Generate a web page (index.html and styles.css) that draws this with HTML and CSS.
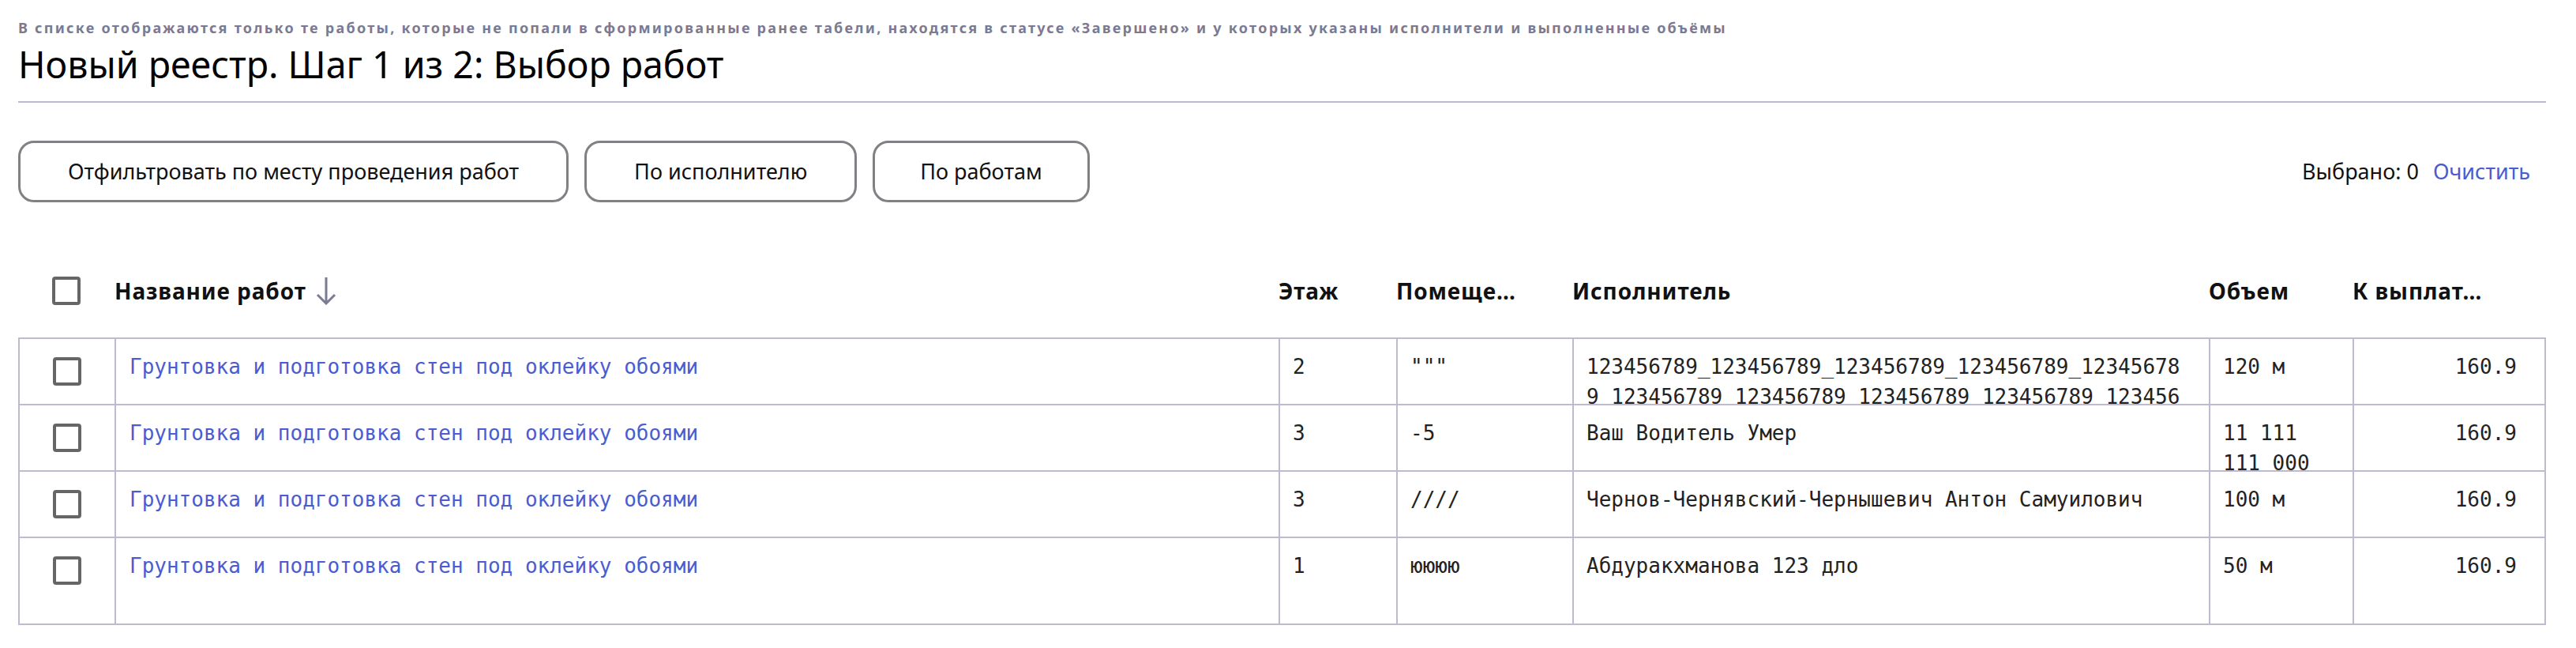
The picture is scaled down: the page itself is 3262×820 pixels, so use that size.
FILE: index.html
```html
<!DOCTYPE html>
<html lang="ru">
<head>
<meta charset="utf-8">
<title>Новый реестр</title>
<link rel="stylesheet" href="styles.css">
</head>
<body>
<div class="page">
  <p class="hint">В списке отображаются только те работы, которые не попали в сформированные ранее табели, находятся в статусе «Завершено» и у которых указаны исполнители и выполненные объёмы</p>
  <h1 class="title">Новый реестр. Шаг 1 из 2: Выбор работ</h1>

  <div class="toolbar">
    <div class="filters">
      <button class="btn">Отфильтровать по месту проведения работ</button>
      <button class="btn">По исполнителю</button>
      <button class="btn btn-narrow">По работам</button>
    </div>
    <div class="selection">
      <span>Выбрано: 0</span>
      <a class="link" href="#">Очистить</a>
    </div>
  </div>

  <div class="grid thead">
    <div class="th th-check"><span class="checkbox"></span></div>
    <div class="th"><span class="label">Название работ</span>
      <svg class="sort" width="26" height="36" viewBox="0 0 26 36"><path d="M13 1 V34 M2 23 L13 34 L24 23" fill="none" stroke="#7b7b93" stroke-width="3"/></svg>
    </div>
    <div class="th"><span class="label">Этаж</span></div>
    <div class="th"><span class="label" title="Помещение">Помеще…</span></div>
    <div class="th"><span class="label">Исполнитель</span></div>
    <div class="th"><span class="label">Объем</span></div>
    <div class="th"><span class="label" title="К выплате">К выплат…</span></div>
  </div>

  <div class="tbody">
    <div class="grid row">
      <div class="td td-check"><span class="checkbox"></span></div>
      <div class="td td-name"><a class="link" href="#">Грунтовка и подготовка стен под оклейку обоями</a></div>
      <div class="td">2</div>
      <div class="td">"""</div>
      <div class="td td-worker">123456789_123456789_123456789_123456789_123456789_123456789_123456789_123456789_123456789_123456789_123456789</div>
      <div class="td td-volume">120 м</div>
      <div class="td td-pay">160.9</div>
    </div>
    <div class="grid row">
      <div class="td td-check"><span class="checkbox"></span></div>
      <div class="td td-name"><a class="link" href="#">Грунтовка и подготовка стен под оклейку обоями</a></div>
      <div class="td">3</div>
      <div class="td">-5</div>
      <div class="td td-worker">Ваш Водитель Умер</div>
      <div class="td td-volume">11 111 111 000</div>
      <div class="td td-pay">160.9</div>
    </div>
    <div class="grid row">
      <div class="td td-check"><span class="checkbox"></span></div>
      <div class="td td-name"><a class="link" href="#">Грунтовка и подготовка стен под оклейку обоями</a></div>
      <div class="td">3</div>
      <div class="td">////</div>
      <div class="td td-worker">Чернов-Чернявский-Чернышевич Антон Самуилович</div>
      <div class="td td-volume">100 м</div>
      <div class="td td-pay">160.9</div>
    </div>
    <div class="grid row row-last">
      <div class="td td-check"><span class="checkbox"></span></div>
      <div class="td td-name"><a class="link" href="#">Грунтовка и подготовка стен под оклейку обоями</a></div>
      <div class="td">1</div>
      <div class="td">юююю</div>
      <div class="td td-worker">Абдуракхманова 123 дло</div>
      <div class="td td-volume">50 м</div>
      <div class="td td-pay">160.9</div>
    </div>
  </div>
</div>
</body>
</html>
```

FILE: styles.css
```css
* { box-sizing: border-box; }

html, body {
  margin: 0;
  padding: 0;
  background: #ffffff;
}

body {
  font-family: "Noto Sans", "Inter", sans-serif;
  color: #111111;
}

.page {
  padding: 23px 38px 0 23px;
}

.hint {
  margin: 0;
  font-size: 18px;
  line-height: 24px;
  font-weight: 700;
  letter-spacing: 2.25px;
  color: #7b7a92;
  white-space: nowrap;
}

.title {
  margin: 4px 0 0 0;
  font-size: 46.5px;
  line-height: 60px;
  font-weight: 400;
  color: #000000;
  padding-bottom: 17px;
  border-bottom: 2px solid #bcbad0;
}

.toolbar {
  margin-top: 48px;
  display: flex;
  align-items: center;
  justify-content: space-between;
  padding-right: 20px;
}

.filters {
  display: flex;
  gap: 20px;
}

.btn {
  font-family: inherit;
  font-size: 27px;
  line-height: 34px;
  color: #111111;
  background: #ffffff;
  border: 3px solid #808185;
  border-radius: 20px;
  padding: 19px 60px;
  height: 78px;
}

.btn-narrow {
  padding: 19px 57px;
}

.selection {
  display: flex;
  align-items: center;
  gap: 18px;
  font-size: 27px;
  line-height: 34px;
}

.link {
  color: #4b5bd0;
  text-decoration: none;
}

.grid {
  display: grid;
  grid-template-columns: 122px 1474px 149px 223px 806px 182px 243px;
}

.thead {
  margin-top: 70px;
  height: 84px;
  align-items: center;
  margin-bottom: 17px;
}

.th {
  display: flex;
  align-items: center;
  gap: 12px;
  font-size: 28px;
  font-weight: 700;
  letter-spacing: 0.9px;
  white-space: nowrap;
  min-width: 0;
}

.th-check {
  justify-content: center;
}

.sort {
  display: block;
  flex: none;
}

.checkbox {
  display: block;
  width: 36px;
  height: 36px;
  border: 4px solid #666666;
  border-radius: 4px;
  background: #ffffff;
}

.tbody {
  border-top: 2px solid #bdbbd1;
  border-left: 2px solid #bdbbd1;
}

.row {
  height: 84px;
}

.row-last {
  height: 110px;
}

.td {
  border-right: 2px solid #bdbbd1;
  border-bottom: 2px solid #bdbbd1;
  padding: 16px 16px 0 16px;
  overflow: hidden;
  font-family: "DejaVu Sans Mono", "Liberation Mono", monospace;
  font-size: 26px;
  line-height: 38px;
  color: #222222;
}

.td-check {
  display: flex;
  justify-content: center;
  padding: 23px 0 0 0;
}

.td-name {
  padding-left: 17px;
}

.td-worker {
  word-break: break-all;
  padding-right: 30px;
}

.td-volume {
  padding-right: 16px;
}

.td-pay {
  text-align: right;
  padding-right: 35px;
}
```
